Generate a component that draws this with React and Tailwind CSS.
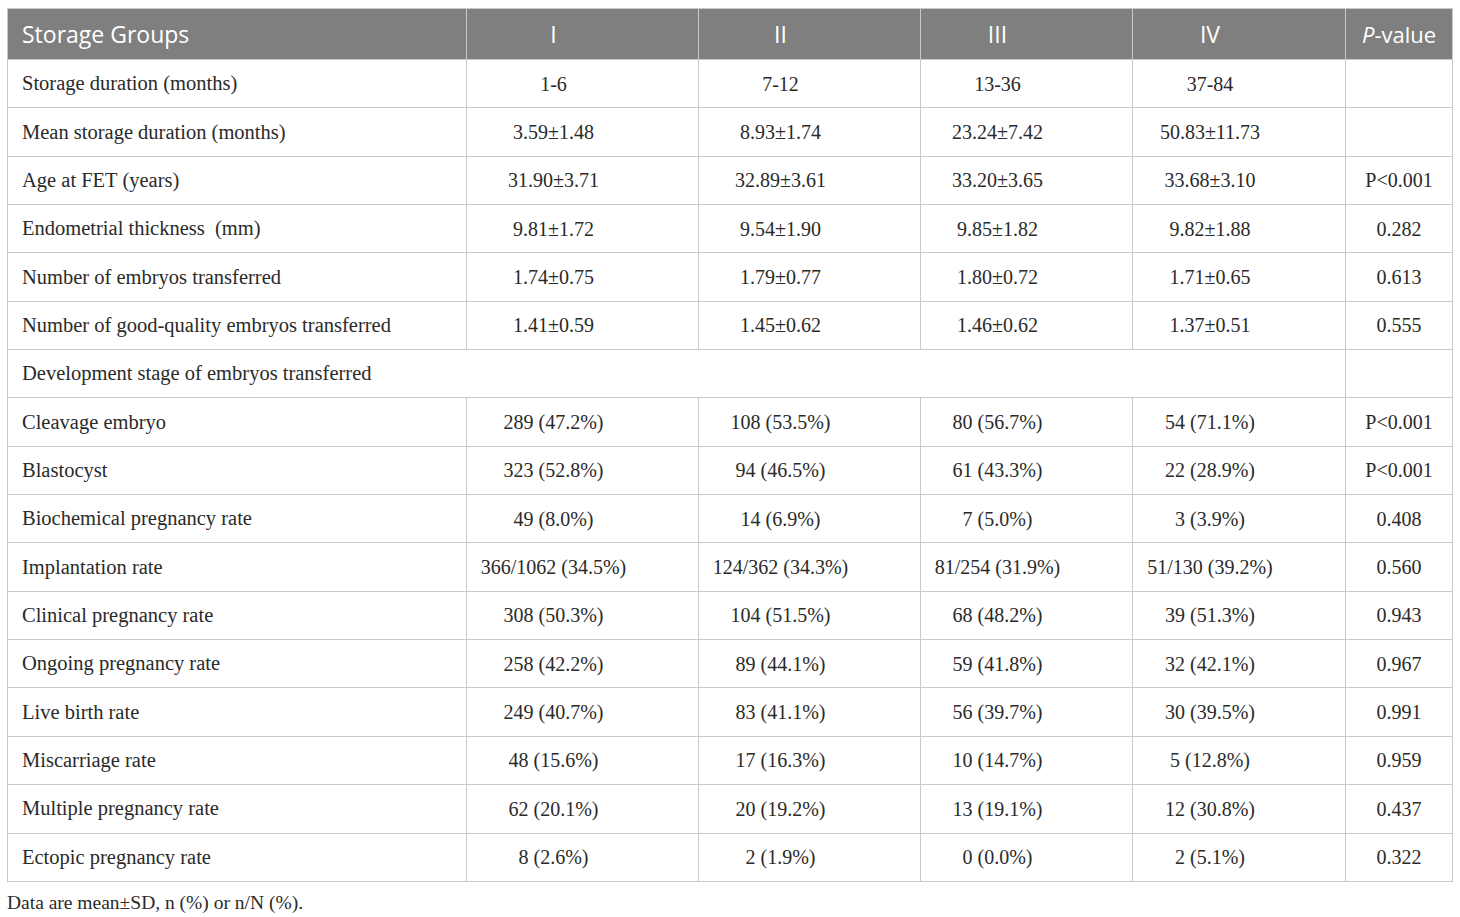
import React from 'react';

// table rows: label, I, II, III, IV, p
const rows = [
  ['Storage duration (months)', '1-6', '7-12', '13-36', '37-84', ''],
  ['Mean storage duration (months)', '3.59±1.48', '8.93±1.74', '23.24±7.42', '50.83±11.73', ''],
  ['Age at FET (years)', '31.90±3.71', '32.89±3.61', '33.20±3.65', '33.68±3.10', 'P<0.001'],
  ['Endometrial thickness\u2002(mm)', '9.81±1.72', '9.54±1.90', '9.85±1.82', '9.82±1.88', '0.282'],
  ['Number of embryos transferred', '1.74±0.75', '1.79±0.77', '1.80±0.72', '1.71±0.65', '0.613'],
  ['Number of good-quality embryos transferred', '1.41±0.59', '1.45±0.62', '1.46±0.62', '1.37±0.51', '0.555'],
  'Development stage of embryos transferred',
  ['Cleavage embryo', '289 (47.2%)', '108 (53.5%)', '80 (56.7%)', '54 (71.1%)', 'P<0.001'],
  ['Blastocyst', '323 (52.8%)', '94 (46.5%)', '61 (43.3%)', '22 (28.9%)', 'P<0.001'],
  ['Biochemical pregnancy rate', '49 (8.0%)', '14 (6.9%)', '7 (5.0%)', '3 (3.9%)', '0.408'],
  ['Implantation rate', '366/1062 (34.5%)', '124/362 (34.3%)', '81/254 (31.9%)', '51/130 (39.2%)', '0.560'],
  ['Clinical pregnancy rate', '308 (50.3%)', '104 (51.5%)', '68 (48.2%)', '39 (51.3%)', '0.943'],
  ['Ongoing pregnancy rate', '258 (42.2%)', '89 (44.1%)', '59 (41.8%)', '32 (42.1%)', '0.967'],
  ['Live birth rate', '249 (40.7%)', '83 (41.1%)', '56 (39.7%)', '30 (39.5%)', '0.991'],
  ['Miscarriage rate', '48 (15.6%)', '17 (16.3%)', '10 (14.7%)', '5 (12.8%)', '0.959'],
  ['Multiple pregnancy rate', '62 (20.1%)', '20 (19.2%)', '13 (19.1%)', '12 (30.8%)', '0.437'],
  ['Ectopic pregnancy rate', '8 (2.6%)', '2 (1.9%)', '0 (0.0%)', '2 (5.1%)', '0.322'],
];

const td = 'border border-[#c9c9c9] h-[48.35px] p-0';
const grp = 'text-center pr-[58px]';
const label = 'pl-[14px] text-[20.5px]';

export default function App() {
  return (
    <div className="bg-white min-h-[917px] pt-[8px] pl-[7px] text-[#2a2a2a]">
      <table className="border-collapse table-fixed w-[1445px] font-['Liberation_Serif',serif] text-[20px]">
        <colgroup>
          <col className="w-[459px]" />
          <col className="w-[232px]" />
          <col className="w-[222px]" />
          <col className="w-[212px]" />
          <col className="w-[213px]" />
          <col className="w-[107px]" />
        </colgroup>
        <thead>
          <tr className="bg-[#7f7f7f] text-white font-['Open_Sans',sans-serif] text-[23px] font-normal">
            <th className="border border-[#c9c9c9] h-[51px] text-left pl-[14px] font-normal">Storage Groups</th>
            <th className={`border border-[#c9c9c9] font-normal ${grp}`}>I</th>
            <th className={`border border-[#c9c9c9] font-normal ${grp}`}>II</th>
            <th className={`border border-[#c9c9c9] font-normal ${grp}`}>III</th>
            <th className={`border border-[#c9c9c9] font-normal ${grp}`}>IV</th>
            <th className="border border-[#c9c9c9] font-normal text-center text-[22px]">
              <i>P</i>-value
            </th>
          </tr>
        </thead>
        <tbody>
          {rows.map((r, i) =>
            typeof r === 'string' ? (
              <tr key={i}>
                <td colSpan={5} className={`${td} ${label}`}>{r}</td>
                <td className={td}></td>
              </tr>
            ) : (
              <tr key={i}>
                <td className={`${td} ${label}`}>{r[0]}</td>
                <td className={`${td} ${grp}`}>{r[1]}</td>
                <td className={`${td} ${grp}`}>{r[2]}</td>
                <td className={`${td} ${grp}`}>{r[3]}</td>
                <td className={`${td} ${grp}`}>{r[4]}</td>
                <td className={`${td} text-center`}>{r[5]}</td>
              </tr>
            )
          )}
        </tbody>
      </table>
      <p className="font-['Liberation_Serif',serif] text-[19.5px] mt-[6px]">Data are mean±SD, n (%) or n/N (%).</p>
    </div>
  );
}
